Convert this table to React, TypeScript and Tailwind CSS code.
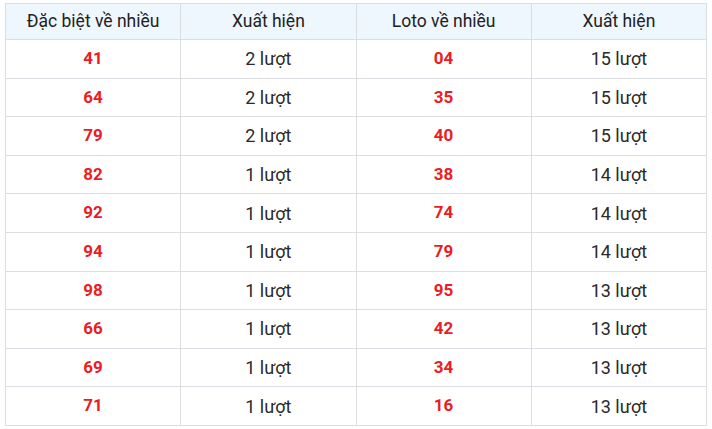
const rows = [
  ["41", "2 lượt", "04", "15 lượt"],
  ["64", "2 lượt", "35", "15 lượt"],
  ["79", "2 lượt", "40", "15 lượt"],
  ["82", "1 lượt", "38", "14 lượt"],
  ["92", "1 lượt", "74", "14 lượt"],
  ["94", "1 lượt", "79", "14 lượt"],
  ["98", "1 lượt", "95", "13 lượt"],
  ["66", "1 lượt", "42", "13 lượt"],
  ["69", "1 lượt", "34", "13 lượt"],
  ["71", "1 lượt", "16", "13 lượt"],
];

export default function App() {
  return (
    <div className="w-[712px] h-[429px] bg-white pl-[5px] pt-[3px] font-['Roboto',sans-serif]">
      <table className="w-[702px] table-fixed border-collapse text-center text-[17px]">
        <thead>
          <tr className="h-[36px] bg-[#eef6fe] text-[#222] text-[17.5px]">
            <th className="border border-[#dcdde3] font-normal">Đặc biệt về nhiều</th>
            <th className="border border-[#dcdde3] font-normal">Xuất hiện</th>
            <th className="border border-[#dcdde3] font-normal">Loto về nhiều</th>
            <th className="border border-[#dcdde3] font-normal">Xuất hiện</th>
          </tr>
        </thead>
        <tbody>
          {rows.map((r, i) => (
            <tr key={i} className="h-[38.6px]">
              <td className="border border-[#dcdde3] font-bold text-[#ec1c24]">{r[0]}</td>
              <td className="border border-[#dcdde3] text-[#2a2a2a] text-[18px]">{r[1]}</td>
              <td className="border border-[#dcdde3] font-bold text-[#ec1c24]">{r[2]}</td>
              <td className="border border-[#dcdde3] text-[#2a2a2a] text-[18px]">{r[3]}</td>
            </tr>
          ))}
        </tbody>
      </table>
    </div>
  );
}
